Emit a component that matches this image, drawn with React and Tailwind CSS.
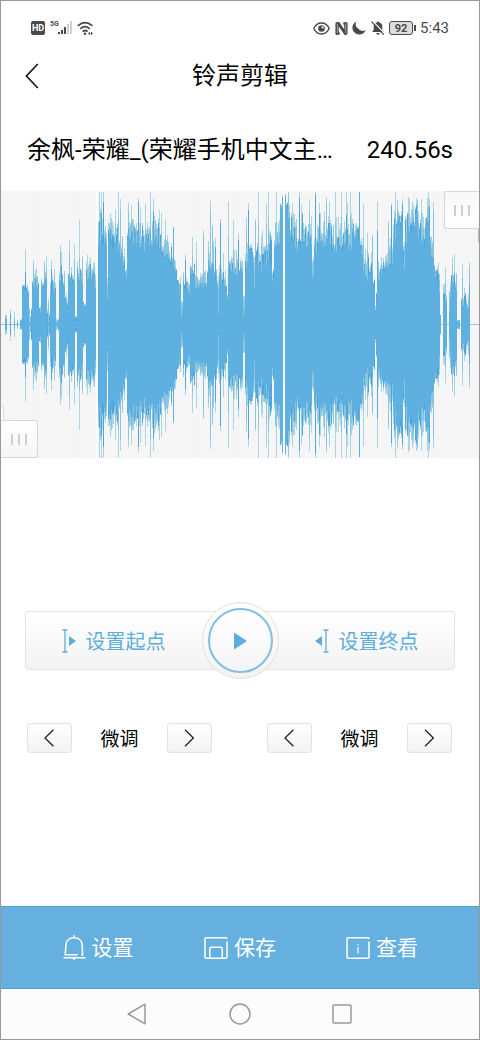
const MID = 133.5;

// [from, to, solid height at start, solid height at end, faded height]
const segments = [
  [5, 7, 5, 5, 10], [10, 11, 4, 3, 16], [14, 15, 3, 3, 14], [17, 18, 2, 3, 11],
  [20, 22, 3, 4, 6], [22, 29, 36, 34, 42], [29, 32, 1, 2, 18], [32, 39, 42, 30, 55],
  [39, 41, 14, 10, 25], [41, 47, 36, 48, 54], [47, 50, 1, 3, 30], [50, 53, 30, 32, 50],
  [53, 56, 34, 25, 48], [56, 59, 1, 4, 8], [59, 65, 46, 40, 55], [65, 68, 27, 10, 32],
  [68, 75, 48, 42, 58], [75, 77, 3, 5, 12], [77, 83, 50, 42, 65], [83, 86, 22, 14, 24],
  [86, 95, 45, 50, 64], [95, 96, 34, 30, 50], [98, 104, 86, 84, 128], [104, 107, 82, 78, 108],
  [107, 108, 26, 26, 80], [108, 118, 83, 80, 108], [118, 125, 74, 58, 102], [125, 127, 50, 45, 56],
  [127, 140, 88, 84, 106], [140, 150, 76, 80, 106], [150, 160, 86, 76, 110], [160, 170, 76, 62, 92],
  [170, 173, 62, 56, 82], [173, 174, 90, 90, 98], [174, 177, 55, 45, 66], [177, 181, 42, 26, 48],
  [181, 183, 7, 20, 40], [183, 190, 40, 30, 54], [190, 195, 54, 50, 62], [195, 203, 36, 42, 52],
  [203, 208, 38, 40, 56], [208, 214, 58, 56, 84], [214, 218, 48, 40, 60], [218, 219, 10, 10, 55],
  [219, 227, 46, 34, 62], [227, 228, 25, 25, 32], [228, 240, 52, 50, 76], [240, 243, 54, 50, 68],
  [243, 245, 9, 20, 30], [245, 248, 50, 60, 100], [248, 254, 72, 64, 84], [254, 255, 33, 33, 70],
  [255, 264, 62, 54, 94], [264, 272, 66, 58, 96], [272, 274, 42, 50, 60], [274, 280, 76, 84, 116],
  [280, 283, 118, 130, 133], [285, 290, 118, 104, 133], [290, 300, 84, 74, 112],
  [300, 312, 84, 76, 112], [312, 314, 46, 55, 84], [314, 322, 74, 78, 112], [322, 330, 78, 84, 133],
  [330, 344, 74, 72, 112], [344, 352, 80, 74, 124], [352, 359, 86, 88, 108], [359, 360, 133, 133, 133],
  [360, 363, 76, 66, 90], [363, 368, 56, 43, 76], [368, 373, 46, 50, 86], [373, 375, 38, 34, 46],
  [375, 377, 11, 38, 40], [377, 381, 42, 46, 76], [381, 387, 54, 58, 80], [387, 393, 54, 64, 98],
  [393, 397, 84, 96, 116], [397, 403, 100, 98, 132], [403, 405, 64, 44, 106], [405, 418, 86, 104, 128],
  [418, 425, 86, 82, 116], [425, 430, 98, 90, 130], [430, 434, 76, 66, 92], [434, 437, 54, 46, 64],
  [437, 440, 42, 24, 60], [440, 441, 10, 3, 10], [443, 447, 24, 20, 46], [449, 451, 14, 38, 52],
  [451, 457, 42, 34, 52], [457, 460, 2, 4, 8], [461, 466, 18, 20, 38], [466, 469, 18, 16, 34],
  [469, 470, 38, 38, 62],
];

// single columns that stick out of their segment
const peaks = {
  5: 10, 10: 16, 25: 76, 33: 65, 36: 57, 44: 64, 46: 69, 51: 65, 54: 56, 60: 80, 61: 74, 69: 85, 74: 80,
  79: 105, 82: 69, 87: 70, 90: 68, 99: 133, 101: 133, 103: 133, 110: 112, 115: 115, 118: 133, 120: 126,
  128: 122, 131: 120, 138: 127, 140: 118, 145: 121, 150: 133, 153: 126, 159: 115, 161: 112, 165: 106,
  173: 98, 185: 70, 192: 88, 196: 83, 203: 94, 210: 124, 212: 100, 215: 87, 220: 106, 223: 72,
  228: 123, 233: 105, 238: 92, 246: 107, 248: 122, 255: 106, 258: 133, 266: 122, 268: 133, 276: 133,
  288: 133, 292: 122, 299: 133, 301: 120, 309: 126, 315: 133, 319: 122, 335: 133, 341: 133, 346: 133,
  350: 133, 363: 121, 367: 92, 372: 90, 377: 123, 388: 104, 391: 122, 395: 133, 421: 126, 428: 133,
  433: 123, 438: 62, 445: 58, 452: 67, 454: 71, 462: 61, 469: 63,
};

function noise(n) {
  const v = Math.sin(n * 12.9898) * 43758.5453;
  return v - Math.floor(v);
}

function buildWave() {
  let solid = "";
  let soft = "";
  let faint = "";
  let edge = "";
  const bar = (x, h) => `M${x} ${MID - h}h1v${h * 2}h-1z`;

  segments.forEach(([from, to, start, end, top]) => {
    for (let x = from; x < to; x++) {
      const base = start + ((end - start) * (x - from)) / (to - from);
      const core = Math.min(133, base * (0.93 + noise(x) * 0.18));
      const spread = Math.max(top - core, 0);
      const outer = Math.min(133, peaks[x] || core + spread * (0.15 + 0.85 * noise(x + 500)));
      const inner = core + (outer - core) * (0.35 + 0.6 * noise(x + 900));
      solid += bar(x, core);
      if (noise(x + 70) > 0.66) {
        edge += bar(x, inner);
      } else {
        soft += bar(x, inner);
      }
      faint += bar(x, outer);
    }
  });
  return { solid, soft, faint, edge };
}

const wave = buildWave();

function Waveform() {
  return (
    <svg
      viewBox="1 0 478 267"
      preserveAspectRatio="none"
      shapeRendering="crispEdges"
      className="block w-full h-[267px]"
    >
      <defs>
        <pattern id="grid" width="10" height="267" patternUnits="userSpaceOnUse">
          <rect width="10" height="267" fill="#f5f5f5" />
          <rect width="1" height="267" fill="#f9f9f9" />
        </pattern>
      </defs>
      <rect width="480" height="267" fill="url(#grid)" />
      <rect y="133" width="480" height="1" fill="#8fc4e0" />
      <path d={wave.faint} fill="#a9d5e5" />
      <path d={wave.soft} fill="#8ac4de" />
      <path d={wave.edge} fill="#4fa6da" />
      <path d={wave.solid} fill="#5eb0e0" />
      <rect x="96" width="2" height="267" fill="#fcfcfc" />
      <rect x="283" width="2" height="267" fill="#fcfcfc" />
    </svg>
  );
}

function Grip() {
  return (
    <span className="flex gap-[5px]">
      <i className="w-[2px] h-[11px] bg-[#cfcfcf]" />
      <i className="w-[2px] h-[11px] bg-[#cfcfcf]" />
      <i className="w-[2px] h-[11px] bg-[#cfcfcf]" />
    </span>
  );
}

function StatusBar() {
  return (
    <div className="h-[54px] px-[30px] flex items-center justify-between text-[#4a4a4a]">
      <div className="flex items-center">
        <span className="w-[14px] h-[14px] rounded-[2px] bg-[#4a4a4a] text-white text-[9px] leading-[14px] font-bold text-center">
          HD
        </span>
        <span className="ml-[5px] w-2 h-4 text-[7px] leading-[8px] font-bold">5G</span>
        <svg width="15" height="14" viewBox="0 0 15 14" fill="#4a4a4a">
          <rect x="0" y="11" width="2" height="2" />
          <rect x="3" y="9" width="2" height="4" />
          <rect x="6" y="6" width="2" height="7" />
          <rect x="9" y="3" width="2" height="10" fill="#d2d2d2" />
          <rect x="12" y="0" width="2" height="13" fill="#d2d2d2" />
        </svg>
        <svg
          width="18"
          height="15"
          viewBox="0 0 18 15"
          className="ml-1"
          fill="none"
          stroke="#4a4a4a"
          strokeWidth="1.7"
        >
          <path d="M.8 4.8Q8 -1.6 15.4 4.8M3.3 7.8Q8 3.6 12.8 7.8M5.6 10.6Q8 8.4 10.6 10.6" />
          <circle cx="8" cy="12.8" r="1.2" fill="#4a4a4a" stroke="none" />
          <path d="M13 10.8 11 12.5l2 1.7zM14 10.8l2 1.7-2 1.7z" fill="#4a4a4a" stroke="none" />
        </svg>
      </div>

      <div className="flex items-center">
        <svg width="17" height="13" viewBox="0 0 17 13" fill="none" stroke="#4a4a4a">
          <path d="M.8 6.5C4.2-.8 12.8-.8 16.2 6.5 12.8 13.8 4.2 13.8.8 6.5z" strokeWidth="1.4" />
          <circle cx="8.5" cy="6.5" r="3.3" fill="#4a4a4a" stroke="none" />
          <circle cx="9.6" cy="5.3" r="1.1" fill="#fff" stroke="none" />
        </svg>
        <svg width="13" height="13" viewBox="0 0 13 13" className="ml-[5px]" fill="#4a4a4a">
          <path d="M2 0H4.2L9.2 7.2V3.4L8.2 2V.6L11 0Q12.6 0 12.6 1.6V11.2Q12.6 13 10.8 13H9.6L3.8 4.6V9.6L4.8 11V12.4L2 13Q.4 13 .4 11.4V1.8Q.4 0 2 0z" />
          <path d="M2.4 1.6V11.4M10.8 1.6V11.4" stroke="#fff" strokeWidth=".5" />
        </svg>
        <svg width="14" height="14" viewBox="0 0 14 14" className="ml-1" fill="#4a4a4a">
          <path d="M4.2.5A6.9 6.9 0 1 0 13.8 9 5.6 5.6 0 0 1 6.2 7.6 5.8 5.8 0 0 1 4.2.5z" />
        </svg>
        <svg width="14" height="14" viewBox="0 0 14 14" className="ml-[5px]" fill="#4a4a4a">
          <path d="M7 .4a1.2 1.2 0 0 1 1.2 1.1A4.2 4.2 0 0 1 11.3 5.6V8.6L12.8 11H1.2L2.7 8.6V5.6A4.2 4.2 0 0 1 5.8 1.5 1.2 1.2 0 0 1 7 .4zM5.3 12h3.4a1.7 1.7 0 0 1-3.4 0z" />
          <path d="M1.4-.2 13.8 12.6" stroke="#fff" strokeWidth="1.2" />
          <path d="M.4.6 12.8 13.6" stroke="#4a4a4a" strokeWidth="1.3" />
        </svg>
        <span className="ml-1 w-[24px] h-[14px] rounded-[3px] border border-[#4a4a4a] bg-[#dcdcdc] text-[11px] leading-[13px] font-bold text-center">
          92
        </span>
        <i className="ml-px w-[2px] h-[6px] bg-[#4a4a4a]" />
        <span className="ml-1 text-[15px] leading-5">5:43</span>
      </div>
    </div>
  );
}

function StepButton({ label, children }) {
  return (
    <button
      type="button"
      aria-label={label}
      className="w-[45px] h-[30px] flex items-center justify-center rounded-[3px] border border-[#e2e2e2] bg-linear-to-b from-white to-[#f3f3f3]"
    >
      {children}
    </button>
  );
}

function FineTune() {
  return (
    <div className="w-[185px] flex items-center justify-between">
      <StepButton label="-">
        <svg width="12" height="18" viewBox="0 0 12 18" fill="none" stroke="#222" strokeWidth="1.3">
          <path d="M9.4 .8 1 9 9.4 17.2" />
        </svg>
      </StepButton>
      <span className="text-[19px] leading-6">微调</span>
      <StepButton label="+">
        <svg width="12" height="18" viewBox="0 0 12 18" fill="none" stroke="#222" strokeWidth="1.3">
          <path d="M2 .8 10.4 9 2 17.2" />
        </svg>
      </StepButton>
    </div>
  );
}

export default function App() {
  return (
    <div className="min-h-screen flex flex-col border border-[#999] bg-white text-black font-[Roboto,'Noto_Sans_CJK_SC',sans-serif]">
      <StatusBar />

      {/* HEADER */}
      <header className="relative h-[42px] flex items-center justify-center">
        <button type="button" aria-label="返回" className="absolute left-6 p-0">
          <svg width="14" height="26" viewBox="0 0 14 26" fill="none" stroke="#111" strokeWidth="1.6">
            <path d="M12.8 1 1.4 13 12.8 25" />
          </svg>
        </button>
        <h1 className="text-[24px] leading-8">铃声剪辑</h1>
      </header>

      {/* TRACK */}
      <div className="h-[94px] pt-3 px-[26px] flex items-center justify-between text-[24px] leading-8 whitespace-nowrap">
        <span>余枫-荣耀_(荣耀手机中文主…</span>
        <span>240.56s</span>
      </div>

      <div className="relative">
        <Waveform />
        <div className="absolute left-0 bottom-[37px] w-[3px] h-[15px] border-t border-r border-[#d8d8d8] bg-white" />
        <button
          type="button"
          aria-label="起点"
          className="absolute left-0 bottom-0 w-[37px] h-[38px] flex items-center justify-center rounded-r-[3px] border border-l-0 border-[#d8d8d8] bg-linear-to-b from-white to-[#f5f5f5]"
        >
          <Grip />
        </button>
        <button
          type="button"
          aria-label="终点"
          className="absolute right-0 top-0 w-[35px] h-[38px] flex items-center justify-center rounded-l-[3px] border border-r-0 border-[#d8d8d8] bg-linear-to-b from-[#f8f8f8] to-white"
        >
          <Grip />
        </button>
        <div className="absolute right-0 top-[38px] w-px h-[13px] bg-[#bbb]" />
      </div>

      {/* START / PLAY / END */}
      <div className="relative mt-[153px] mx-6 h-[59px] flex rounded-[3px] border border-[#e4e4e4] bg-linear-to-b from-white to-[#f3f3f3] text-[#5eaedc] text-[20px] leading-7 font-['Noto_Sans_CJK_SC',sans-serif]">
        <button type="button" className="flex-1 pr-10 flex items-center justify-center gap-[10px]">
          <svg width="14" height="24" viewBox="0 0 14 24" fill="none" stroke="currentColor" strokeWidth="1.3">
            <path d="M.5 1H5.5M.5 23H5.5M3 1V23" />
            <path d="M7 7v10l7-5z" fill="currentColor" stroke="none" />
          </svg>
          设置起点
        </button>
        <button type="button" className="flex-1 pl-[38px] flex items-center justify-center gap-[10px]">
          <svg width="14" height="24" viewBox="0 0 14 24" fill="none" stroke="currentColor" strokeWidth="1.3">
            <path d="M8.5 1H13.5M8.5 23H13.5M11 1V23" />
            <path d="M7 7v10L0 12z" fill="currentColor" stroke="none" />
          </svg>
          设置终点
        </button>
        <button
          type="button"
          aria-label="播放"
          className="absolute inset-0 m-auto -top-[10px] -bottom-[10px] w-[77px] h-[77px] p-[5px] rounded-full border border-[#e0e0e0] bg-linear-to-b from-white to-[#f3f3f3]"
        >
          <span className="w-full h-full flex items-center justify-center rounded-full border-2 border-[#7fc0e0] bg-linear-to-b from-white to-[#f5f5f5]">
            <svg width="14" height="18" viewBox="0 0 14 18" fill="#5aaee0">
              <path d="M1 .5v17L14 9z" />
            </svg>
          </span>
        </button>
      </div>

      {/* FINE TUNE */}
      <div className="mt-[53px] pl-[26px] pr-[27px] flex justify-between font-['Noto_Sans_CJK_SC',sans-serif]">
        <FineTune />
        <FineTune />
      </div>

      {/* BOTTOM MENU */}
      <div className="mt-auto h-[83px] px-[26px] grid grid-cols-3 border-y border-[#4ba3d8] bg-[#65b0df] text-white text-[21px] leading-8">
        <button type="button" className="flex items-center justify-center gap-[6px]">
          <svg width="23" height="26" viewBox="0 0 23 26" fill="none" stroke="currentColor" strokeWidth="1.5">
            <path d="M18 19.8H19.6L19.2 10.5C19.2 5.6 15.6 2.8 11 2.8S2.9 5.6 2.9 10.5L2.2 19.8H14.5" />
            <path d="M.5 22.8H22.5M11 .3V3M11 22.8v2.5" />
          </svg>
          设置
        </button>
        <button type="button" className="flex items-center justify-center gap-[6px]">
          <svg width="24" height="24" viewBox="0 0 24 24" fill="none" stroke="currentColor" strokeWidth="1.5">
            <path d="M23 5.5V21Q23 22.2 21.8 22.2H2.2Q1 22.2 1 21V3Q1 1.8 2.2 1.8H21.8Q23 1.8 23 3" />
            <path d="M5.8 22V12.6Q5.8 11.2 7.2 11.2H16.8Q18.2 11.2 18.2 12.6V22" />
          </svg>
          保存
        </button>
        <button type="button" className="flex items-center justify-center gap-[6px]">
          <svg width="24" height="24" viewBox="0 0 24 24" fill="none" stroke="currentColor" strokeWidth="1.5">
            <path d="M23 5.5V21Q23 22.2 21.8 22.2H2.2Q1 22.2 1 21V3Q1 1.8 2.2 1.8H21.8Q23 1.8 23 3" />
            <path d="M12 8v1.6M12 11v6.5" strokeWidth="1.2" />
          </svg>
          查看
        </button>
      </div>

      {/* SYSTEM NAVIGATION */}
      <nav className="h-[50px] flex items-center justify-center gap-[80px] bg-[#fcfcfc] text-[#999]">
        <svg width="22" height="22" viewBox="0 0 22 22" fill="none" stroke="currentColor" strokeWidth="1.5" strokeLinejoin="round">
          <path d="M18 1.2V20.8L1.2 11z" />
        </svg>
        <svg width="22" height="22" viewBox="0 0 22 22" fill="none" stroke="currentColor" strokeWidth="1.5">
          <circle cx="11" cy="11" r="10" />
        </svg>
        <svg width="22" height="22" viewBox="0 0 22 22" fill="none" stroke="currentColor" strokeWidth="1.5">
          <rect x="2" y="2" width="18" height="18" rx="1" />
        </svg>
      </nav>
    </div>
  );
}
